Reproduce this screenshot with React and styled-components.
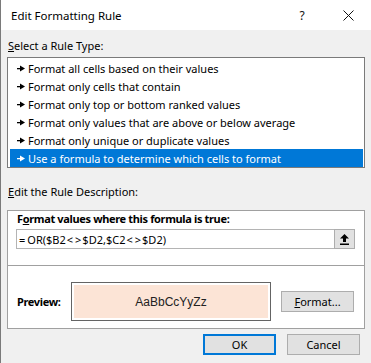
import React from "react";
import styled, { createGlobalStyle } from "styled-components";

const GlobalStyle = createGlobalStyle`
  html, body {
    margin: 0;
    padding: 0;
    background: #f0f0f0;
  }
  body {
    font-family: "Noto Sans", sans-serif;
    font-size: 11px;
    color: #000;
  }
`;

const Dialog = styled.div`
  width: 371px;
  height: 363px;
  box-sizing: border-box;
  background: #f0f0f0;
  border-left: 1px solid #7a7a7a;
  display: flex;
  flex-direction: column;
`;

const TitleBar = styled.div`
  height: 30px;
  flex: none;
  background: #fff;
  display: flex;
  align-items: center;
  padding-left: 10px;
`;

const Title = styled.div`
  flex: 1;
  font-size: 11.5px;
  color: #000;
`;

const TitleButton = styled.div`
  width: 46px;
  height: 30px;
  display: flex;
  align-items: center;
  justify-content: center;
  font-size: 12px;
  color: #111;
`;

const Body = styled.div`
  padding: 0 6px;
  display: flex;
  flex-direction: column;
`;

const SectionLabel = styled.div`
  line-height: 16px;
  margin-top: ${(p) => p.$top}px;
  padding-left: 1px;
`;

const ListBox = styled.div`
  margin-top: 3px;
  background: #fff;
  border: 1px solid #7a7a7a;
  padding: 1px 1px 0 2px;
`;

const Row = styled.div`
  height: 18px;
  display: flex;
  align-items: center;
  gap: 3px;
  padding-left: 7px;
  background: ${(p) => (p.$selected ? "#0078d7" : "transparent")};
  color: ${(p) => (p.$selected ? "#fff" : "#000")};
`;

const DescBox = styled.div`
  margin-top: 10px;
  height: 119px;
  box-sizing: border-box;
  background: #fff;
  border: 1px solid #a0a0a0;
  display: flex;
  flex-direction: column;
`;

const FormulaSection = styled.div`
  padding: 0 9px 16px 8px;
  border-bottom: 1px solid #a0a0a0;
`;

const BoldLabel = styled.div`
  font-weight: 700;
  line-height: 15px;
  letter-spacing: -0.35px;
  padding-left: ${(p) => p.$indent || 0}px;
`;

const FormulaRow = styled.div`
  margin-top: 3px;
  display: flex;
  height: 20px;
`;

const FormulaInput = styled.div`
  flex: 1;
  box-sizing: border-box;
  border: 1px solid #b4b4b4;
  border-right: none;
  display: flex;
  align-items: center;
  padding-left: 2px;
`;

const Op = styled.span`
  padding: 0 1px;
`;

const CollapseButton = styled.div`
  width: 21px;
  box-sizing: border-box;
  background: #e1e1e1;
  border: 1px solid #adadad;
  display: flex;
  align-items: center;
  justify-content: center;
`;

const PreviewRow = styled.div`
  padding: 16px 9px 6px 9px;
  display: flex;
  align-items: center;
`;

const PreviewLabel = styled(BoldLabel)`
  width: 54px;
`;

const PreviewBox = styled.div`
  width: 200px;
  height: 39px;
  box-sizing: border-box;
  border: 1px solid #646464;
  padding: 2px;
  background: #fff;
`;

const PreviewFill = styled.div`
  height: 100%;
  background: #fce4d6;
  display: flex;
  align-items: center;
  justify-content: center;
  font-family: "Liberation Sans", sans-serif;
  font-size: 12px;
  color: #222;
`;

const Button = styled.button`
  width: 73px;
  height: 21px;
  box-sizing: border-box;
  padding: 0;
  background: #e1e1e1;
  border: ${(p) => (p.$default ? "2px solid #0078d7" : "1px solid #adadad")};
  font-family: "Noto Sans", sans-serif;
  font-size: 11px;
  color: #000;
`;

const FormatButton = styled(Button)`
  margin-left: 10px;
`;

const ButtonBar = styled.div`
  margin-top: 5px;
  display: flex;
  justify-content: flex-end;
  gap: 11px;
  padding-right: 5px;
`;

const RuleArrow = ({ color }) => (
  <svg width="8" height="7" viewBox="0 0 8 7">
    <rect x="0" y="3" width="4" height="1.3" fill={color} />
    <polygon points="3,0.5 8,3.6 3,6.6" fill={color} />
  </svg>
);

const CloseIcon = () => (
  <svg width="11" height="11" viewBox="0 0 11 11">
    <path d="M0.5 0.5 L10.5 10.5 M10.5 0.5 L0.5 10.5" stroke="#111" strokeWidth="1" />
  </svg>
);

const UploadIcon = () => (
  <svg width="9" height="11" viewBox="0 0 9 11">
    <polygon points="4.5,0 9,4.5 6,4.5 6,8 3,8 3,4.5 0,4.5" fill="#000" />
    <rect x="0" y="9.5" width="9" height="1.5" fill="#000" />
  </svg>
);

const rules = [
  "Format all cells based on their values",
  "Format only cells that contain",
  "Format only top or bottom ranked values",
  "Format only values that are above or below average",
  "Format only unique or duplicate values",
  "Use a formula to determine which cells to format",
];

export default function App() {
  const selected = 5;
  return (
    <>
      <GlobalStyle />
      <Dialog>
        <TitleBar>
          <Title>Edit Formatting Rule</Title>
          <TitleButton>?</TitleButton>
          <TitleButton>
            <CloseIcon />
          </TitleButton>
        </TitleBar>
        <Body>
          <SectionLabel $top={8}>
            <u>S</u>elect a Rule Type:
          </SectionLabel>
          <ListBox>
            {rules.map((r, i) => (
              <Row key={r} $selected={i === selected}>
                <RuleArrow color={i === selected ? "#fff" : "#000"} />
                {r}
              </Row>
            ))}
          </ListBox>
          <SectionLabel $top={16}>
            <u>E</u>dit the Rule Description:
          </SectionLabel>
          <DescBox>
            <FormulaSection>
              <BoldLabel $indent={1}>
                F<u>o</u>rmat values where this formula is true:
              </BoldLabel>
              <FormulaRow>
                <FormulaInput>
                  =<Op />OR($B2<Op>&lt;</Op><Op>&gt;</Op>$D2,$C2<Op>&lt;</Op><Op>&gt;</Op>$D2)
                </FormulaInput>
                <CollapseButton>
                  <UploadIcon />
                </CollapseButton>
              </FormulaRow>
            </FormulaSection>
            <PreviewRow>
              <PreviewLabel>Preview:</PreviewLabel>
              <PreviewBox>
                <PreviewFill>AaBbCcYyZz</PreviewFill>
              </PreviewBox>
              <FormatButton>
                <u>F</u>ormat...
              </FormatButton>
            </PreviewRow>
          </DescBox>
          <ButtonBar>
            <Button $default>OK</Button>
            <Button>Cancel</Button>
          </ButtonBar>
        </Body>
      </Dialog>
    </>
  );
}
